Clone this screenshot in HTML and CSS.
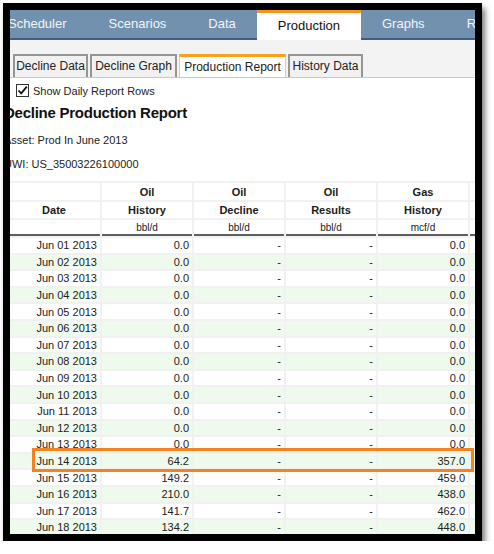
FILE: index.html
```html
<!DOCTYPE html>
<html lang="en">
<head>
    <meta charset="UTF-8">
    <title>Decline Production Report</title>
    <link rel="stylesheet" href="styles.css">
</head>
<body>
    <div class="frame">
        <div class="screen">
            <div class="tabbar">
                <div class="tab">Scheduler</div>
                <div class="tab">Scenarios</div>
                <div class="tab">Data</div>
                <div class="tab active">Production</div>
                <div class="tab">Graphs</div>
                <div class="tab">Reports</div>
            </div>

            <div class="subbar">
                <div class="subtab w-data">Decline Data</div>
                <div class="subtab w-graph">Decline Graph</div>
                <div class="subtab w-report active">Production Report</div>
                <div class="subtab w-data">History Data</div>
            </div>

            <div class="options">
                <span class="check">
                    <svg width="11" height="11" viewBox="0 0 11 11"><path d="M1.5 5.5 L4.2 8.4 L9.8 1.6" fill="none" stroke="#111" stroke-width="1.7"/></svg>
                </span>
                <span>Show Daily Report Rows</span>
            </div>

            <div class="title">Decline Production Report</div>
            <div class="meta">Asset: Prod In June 2013</div>
            <div class="meta">UWI: US_35003226100000</div>

            <table class="report">
                <colgroup>
                    <col class="c-date">
                    <col class="c-val">
                    <col class="c-val">
                    <col class="c-val">
                    <col class="c-val">
                    <col class="c-val">
                </colgroup>
                <thead>
                    <tr class="h1">
                        <th></th><th>Oil</th><th>Oil</th><th>Oil</th><th>Gas</th><th>Gas</th>
                    </tr>
                    <tr class="h2">
                        <th>Date</th><th>History</th><th>Decline</th><th>Results</th><th>History</th><th>Decline</th>
                    </tr>
                    <tr class="h3">
                        <th></th><th>bbl/d</th><th>bbl/d</th><th>bbl/d</th><th>mcf/d</th><th>mcf/d</th>
                    </tr>
                </thead>
                <tbody>
                    <tr><td>Jun 01 2013</td><td>0.0</td><td>-</td><td>-</td><td>0.0</td><td>-</td></tr>
                    <tr><td>Jun 02 2013</td><td>0.0</td><td>-</td><td>-</td><td>0.0</td><td>-</td></tr>
                    <tr><td>Jun 03 2013</td><td>0.0</td><td>-</td><td>-</td><td>0.0</td><td>-</td></tr>
                    <tr><td>Jun 04 2013</td><td>0.0</td><td>-</td><td>-</td><td>0.0</td><td>-</td></tr>
                    <tr><td>Jun 05 2013</td><td>0.0</td><td>-</td><td>-</td><td>0.0</td><td>-</td></tr>
                    <tr><td>Jun 06 2013</td><td>0.0</td><td>-</td><td>-</td><td>0.0</td><td>-</td></tr>
                    <tr><td>Jun 07 2013</td><td>0.0</td><td>-</td><td>-</td><td>0.0</td><td>-</td></tr>
                    <tr><td>Jun 08 2013</td><td>0.0</td><td>-</td><td>-</td><td>0.0</td><td>-</td></tr>
                    <tr><td>Jun 09 2013</td><td>0.0</td><td>-</td><td>-</td><td>0.0</td><td>-</td></tr>
                    <tr><td>Jun 10 2013</td><td>0.0</td><td>-</td><td>-</td><td>0.0</td><td>-</td></tr>
                    <tr><td>Jun 11 2013</td><td>0.0</td><td>-</td><td>-</td><td>0.0</td><td>-</td></tr>
                    <tr><td>Jun 12 2013</td><td>0.0</td><td>-</td><td>-</td><td>0.0</td><td>-</td></tr>
                    <tr><td>Jun 13 2013</td><td>0.0</td><td>-</td><td>-</td><td>0.0</td><td>-</td></tr>
                    <tr><td>Jun 14 2013</td><td>64.2</td><td>-</td><td>-</td><td>357.0</td><td>-</td></tr>
                    <tr><td>Jun 15 2013</td><td>149.2</td><td>-</td><td>-</td><td>459.0</td><td>-</td></tr>
                    <tr><td>Jun 16 2013</td><td>210.0</td><td>-</td><td>-</td><td>438.0</td><td>-</td></tr>
                    <tr><td>Jun 17 2013</td><td>141.7</td><td>-</td><td>-</td><td>462.0</td><td>-</td></tr>
                    <tr><td>Jun 18 2013</td><td>134.2</td><td>-</td><td>-</td><td>448.0</td><td>-</td></tr>
                    <tr><td>Jun 19 2013</td><td>128.5</td><td>-</td><td>-</td><td>441.0</td><td>-</td></tr>
                </tbody>
            </table>

            <div class="highlight"></div>
        </div>
    </div>
</body>
</html>
```

FILE: styles.css
```css
body {
    margin: 0;
    background: #fff;
    font-family: "Liberation Sans", Arial, sans-serif;
    color: #222;
}
.frame {
    margin: 3px 0 0 3px;
    width: 465px;
    border: 7px solid #000;
    box-shadow: 3px 5px 6px rgba(0,0,0,0.55);
}
.screen {
    position: relative;
    height: 524px;
    overflow: hidden;
    background: #fff;
}

/* main tabs */
.tabbar {
    display: flex;
    height: 28px;
    margin-left: -23px;
    background: #7291ae;
    border-bottom: 2px solid #3f5e86;
    white-space: nowrap;
}
.tab {
    flex: none;
    padding: 0 21px;
    font-size: 13px;
    line-height: 28px;
    color: #f2f5f9;
}
.tab.active {
    box-sizing: border-box;
    height: 30px;
    line-height: 26px;
    background: #fff;
    border-top: 3px solid #f7931e;
    color: #111;
}

/* sub tabs */
.subbar {
    display: flex;
    gap: 2px;
    height: 23px;
    padding: 14px 0 0 3px;
    background: #f3f3f3;
    border-bottom: 1px solid #c9c9c9;
}
.subtab {
    box-sizing: border-box;
    height: 23px;
    border: 2px solid #959595;
    border-bottom: none;
    background: #f1f1f1;
    font-size: 12px;
    line-height: 21px;
    text-align: center;
    white-space: nowrap;
}
.subtab.active {
    border: 1px solid #cfcfcf;
    border-top: 3px solid #f7a11c;
    border-bottom: none;
    background: #fff;
    line-height: 20px;
}
.w-data { width: 75px; }
.w-graph { width: 87px; }
.w-report { width: 107px; }

.options {
    display: flex;
    align-items: center;
    gap: 4px;
    height: 13px;
    margin: 6px 0 0 6px;
    font-size: 11px;
}
.check {
    box-sizing: border-box;
    display: flex;
    align-items: center;
    justify-content: center;
    width: 13px;
    height: 13px;
    border: 1px solid #333;
    background: #fff;
}
.title {
    margin: 6px 0 0 -6px;
    font-size: 15px;
    font-weight: bold;
    letter-spacing: -0.25px;
    line-height: 20px;
    color: #111;
}
.meta {
    margin: 10px 0 0 -6px;
    font-size: 11px;
    line-height: 14px;
    white-space: nowrap;
}

/* report table */
.report {
    table-layout: fixed;
    width: 556px;
    margin: 10px 0 0 -4px;
    border-collapse: separate;
    border-spacing: 2px;
    background: #f1f1f1;
    font-size: 11px;
}
.c-date { width: 92px; }
.c-val { width: 90px; }
.report th {
    padding: 0;
    background: #fff;
    font-weight: bold;
    text-align: center;
    color: #1a1a1a;
}
.h1 th { height: 17px; }
.h2 th { height: 16px; }
.h3 th {
    box-sizing: border-box;
    height: 16px;
    font-size: 10px;
    font-weight: normal;
    border-bottom: 2px solid #5e5e5e;
}
.report td {
    height: 14.6px;
    padding: 0 3px 0 0;
    background: #fff;
    text-align: right;
    line-height: 14px;
    white-space: nowrap;
}
.report tbody tr:nth-child(even) td {
    background: #eefaec;
}

.highlight {
    position: absolute;
    left: 22px;
    top: 438px;
    width: 442px;
    height: 24px;
    box-sizing: border-box;
    border: 3px solid #f5821f;
}
```
